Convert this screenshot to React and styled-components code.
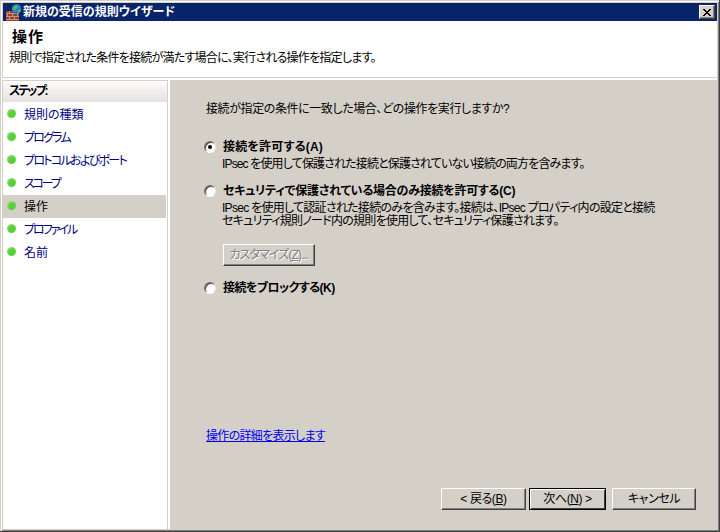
import React from 'react';
import styled, { createGlobalStyle } from 'styled-components';

const FONT = `"Liberation Sans", "Noto Sans CJK JP", sans-serif`;

const GlobalStyle = createGlobalStyle`
    html, body {
        margin: 0;
        padding: 0;
        background: #d4d0c8;
    }
    body {
        font-family: ${FONT};
        font-size: 12px;
        color: #000;
        font-feature-settings: "palt";
    }
`;

// squeeze = letter-spacing, the original font has much narrower katakana
const STEPS = [
    { label: '規則の種類', squeeze: 0 },
    { label: 'プログラム', squeeze: -1.8 },
    { label: 'プロトコルおよびポート', squeeze: -1.7 },
    { label: 'スコープ', squeeze: -2.2 },
    { label: '操作', squeeze: 0, active: true },
    { label: 'プロファイル', squeeze: -2 },
    { label: '名前', squeeze: 0 },
];

const FirewallIcon = () => (
    <TitleIconSvg viewBox="0 0 16 17" width="16" height="17">
        <rect x="0" y="7" width="13" height="10" fill="#983f28" />
        <path d="M0 9.500h13M0 12.500h13M0 15.500h13" stroke="#c8947c" strokeWidth="1" />
        <path d="M3.500 7v2M8.500 7v2M1.500 10v2M6.500 10v2M11.500 10v2M3.500 13v2M8.500 13v2" stroke="#c8947c" strokeWidth="1" />
        <circle cx="10.500" cy="5" r="4.800" fill="#2b78d6" />
        <path d="M7.500 3c1.500-2 3.500-2 4.500-1s-1 2-2 3-1 2-2 1.500-1-2.500-.5-3.500z" fill="#4fc03a" />
        <path d="M12 6c1-.5 3-1 3 0s-1.500 3-2.500 2.500-1-2-.5-2.500z" fill="#4fc03a" />
    </TitleIconSvg>
);

const CloseIcon = () => (
    <svg viewBox="0 0 8 7" width="8" height="7" shapeRendering="crispEdges">
        <path d="M0 0h2v1h1v1h2V1h1V0h2v1H7v1H6v1H5v1h1v1h1v1h1v1H6V6H5V5H3v1H2v1H0V6h1V5h1V4h1V3H2V2H1V1H0z" fill="#000" />
    </svg>
);

const App = () => {
    return <Window>
        <GlobalStyle />
        <TitleBar>
            <FirewallIcon />
            <TitleText>新規の受信の規則ウイザード</TitleText>
            <CloseButton><CloseIcon /></CloseButton>
        </TitleBar>
        <Header>
            <Heading>操作</Heading>
            <Subtitle>規則で指定された条件を接続が満たす場合に、実行される操作を指定します。</Subtitle>
        </Header>
        <Body>
            <Nav>
                <NavHeader>ステップ:</NavHeader>
                <StepList>
                    {STEPS.map((step) => (
                        <Step key={step.label} $active={step.active}>
                            <Orb />
                            <StepLabel $squeeze={step.squeeze}>{step.label}</StepLabel>
                        </Step>
                    ))}
                </StepList>
            </Nav>
            <Content>
                <Question>接続が指定の条件に一致した場合、どの操作を実行しますか?</Question>
                <OptionRow>
                    <Radio $checked />
                    <OptionLabel $squeeze={0.2}>接続を許可する(A)</OptionLabel>
                </OptionRow>
                <OptionDesc $squeeze={-0.85}>IPsec を使用して保護された接続と保護されていない接続の両方を含みます。</OptionDesc>
                <OptionRow $gap={12}>
                    <Radio />
                    <OptionLabel $squeeze={-0.25}>セキュリティで保護されている場合のみ接続を許可する(C)</OptionLabel>
                </OptionRow>
                <OptionDesc $squeeze={-0.72}>
                    IPsec を使用して認証された接続のみを含みます。接続は、IPsec プロパティ内の設定と接続<br />
                    セキュリティ規則ノード内の規則を使用して、セキュリティ保護されます。
                </OptionDesc>
                <CustomizeButton>カスタマイズ(<u>Z</u>)...</CustomizeButton>
                <OptionRow $gap={14}>
                    <Radio />
                    <OptionLabel $squeeze={-0.55}>接続をブロックする(K)</OptionLabel>
                </OptionRow>
                <DetailLink href="#">操作の詳細を表示します</DetailLink>
                <ButtonRow>
                    <WizardButton $width={85}>&lt; 戻る(<u>B</u>)</WizardButton>
                    <WizardButton $width={77} $primary>次へ(<u>N</u>) &gt;</WizardButton>
                    <WizardButton $width={84} $left={3}>キャンセル</WizardButton>
                </ButtonRow>
            </Content>
        </Body>
    </Window>
};

export default App;

const Window = styled.div`
    box-sizing: border-box;
    width: 720px;
    height: 532px;
    display: flex;
    flex-direction: column;
    padding: 3px 2px 0 3px;
    background: #d4d0c8;
    border-right: 1px solid #404040;
    border-bottom: 1px solid #404040;
    box-shadow: inset 1px 1px 0 #d4d0c8, inset 2px 2px 0 #fff, inset -1px -1px 0 #808080;
    overflow: hidden;
`;

const TitleBar = styled.div`
    flex: none;
    height: 18px;
    display: flex;
    align-items: center;
    padding: 0 2px 0 3px;
    background: #0a246a;
`;

const TitleIconSvg = styled.svg`
    flex: none;
    margin-right: 1px;
`;

const TitleText = styled.span`
    flex: 1;
    color: #fff;
    font-size: 12px;
    font-weight: 700;
    line-height: 18px;
`;

const CloseButton = styled.div`
    box-sizing: border-box;
    width: 16px;
    height: 14px;
    display: flex;
    align-items: center;
    justify-content: center;
    background: #d4d0c8;
    border-style: solid;
    border-width: 1px;
    border-color: #fff #404040 #404040 #fff;
    box-shadow: inset -1px -1px 0 #808080;
`;

const Header = styled.div`
    flex: none;
    height: 56px;
    box-sizing: border-box;
    padding: 6px 0 0 6px;
    background: #fff;
`;

const Heading = styled.div`
    padding-left: 3px;
    font-size: 15px;
    font-weight: 700;
    letter-spacing: 1px;
    line-height: 20px;
`;

const Subtitle = styled.div`
    margin-top: 3px;
    font-size: 12px;
    line-height: 16px;
    letter-spacing: -0.75px;
    white-space: nowrap;
`;

const Body = styled.div`
    flex: 1;
    min-height: 0;
    display: flex;
    margin: 1px 0 2px -1px;
    padding-top: 2px;
    background: #fff;
`;

const Nav = styled.div`
    flex: none;
    box-sizing: border-box;
    width: 166px;
    display: flex;
    flex-direction: column;
    background: #fff;
    border: 1px solid #d4d0c8;
    border-bottom: none;
`;

const NavHeader = styled.div`
    flex: none;
    height: 20px;
    margin-top: 1px;
    padding-left: 6px;
    font-size: 12px;
    font-weight: 700;
    line-height: 18px;
    letter-spacing: -2px;
    background: linear-gradient(to bottom, #fbfafa, #e6e1e0);
`;

const StepList = styled.ul`
    list-style: none;
    margin: 1px 1px 0 0;
    padding: 0;
`;

const Step = styled.li`
    box-sizing: border-box;
    height: 23px;
    padding-bottom: 2px;
    display: flex;
    align-items: center;
    font-size: 12px;
    white-space: nowrap;
    color: ${(p) => (p.$active ? '#000' : '#000080')};
    background: ${(p) => (p.$active ? '#d4d0c8' : 'transparent')};
`;

const StepLabel = styled.span`
    letter-spacing: ${(p) => p.$squeeze}px;
`;

const Orb = styled.span`
    flex: none;
    width: 9px;
    height: 9px;
    margin: 0 8px 0 4px;
    border-radius: 50%;
    background: radial-gradient(circle at 62% 65%, #55d02e 0%, #5fd03c 45%, #9fdc8c 78%, #dcebd6 100%);
`;

const Content = styled.div`
    flex: 1;
    min-width: 0;
    display: flex;
    flex-direction: column;
    margin-left: 2px;
    padding: 21px 21px 19px 35px;
    background: #d4d0c8;
`;

const Question = styled.div`
    font-size: 12px;
    line-height: 16px;
    letter-spacing: -0.4px;
    margin-left: 1px;
    white-space: nowrap;
`;

const OptionRow = styled.div`
    display: flex;
    align-items: center;
    margin-top: ${(p) => p.$gap ?? 22}px;
    height: 16px;
`;

const Radio = styled.span`
    flex: none;
    box-sizing: border-box;
    width: 12px;
    height: 12px;
    margin-left: -1px;
    border-radius: 50%;
    background: #fff;
    border: 1px solid;
    border-color: #707070 #e8e6e0 #fff #707070;
    box-shadow: inset 1px 1px 0 #404040;
    position: relative;

    &::after {
        content: '';
        display: ${(p) => (p.$checked ? 'block' : 'none')};
        position: absolute;
        top: 3px;
        left: 3px;
        width: 4px;
        height: 4px;
        border-radius: 50%;
        background: #000;
    }
`;

const OptionLabel = styled.span`
    margin-left: 7px;
    font-size: 12px;
    font-weight: 700;
    line-height: 16px;
    letter-spacing: ${(p) => p.$squeeze}px;
    white-space: nowrap;
`;

const OptionDesc = styled.div`
    margin-left: 17px;
    margin-top: 3px;
    font-size: 12px;
    line-height: 13px;
    letter-spacing: ${(p) => p.$squeeze}px;
    white-space: nowrap;
`;

const CustomizeButton = styled.div`
    box-sizing: border-box;
    width: 92px;
    height: 22px;
    margin: 16px 0 0 18px;
    font-size: 12px;
    line-height: 20px;
    letter-spacing: -0.9px;
    text-align: center;
    white-space: nowrap;
    color: #808080;
    text-shadow: 1px 1px 0 #fff;
    background: #d4d0c8;
    border: 1px solid;
    border-color: #fff #404040 #404040 #fff;
    box-shadow: inset -1px -1px 0 #808080;
`;

const DetailLink = styled.a`
    margin-top: 132px;
    margin-left: 1px;
    align-self: flex-start;
    font-size: 12px;
    line-height: 16px;
    letter-spacing: -0.7px;
    color: #0000ee;
    text-decoration: underline;
`;

const ButtonRow = styled.div`
    margin-top: auto;
    display: flex;
    justify-content: flex-end;
    gap: 3px;
`;

const WizardButton = styled.div`
    box-sizing: border-box;
    width: ${(p) => p.$width}px;
    height: 22px;
    margin-left: ${(p) => p.$left ?? 0}px;
    font-size: 12px;
    line-height: 21px;
    letter-spacing: -0.4px;
    text-align: center;
    background: #d4d0c8;
    border: 1px solid;
    border-color: ${(p) => (p.$primary ? '#000' : '#fff #404040 #404040 #fff')};
    box-shadow: ${(p) => (p.$primary ? 'inset 1px 1px 0 #fff, inset -1px -1px 0 #404040' : 'inset -1px -1px 0 #808080')};
`;
